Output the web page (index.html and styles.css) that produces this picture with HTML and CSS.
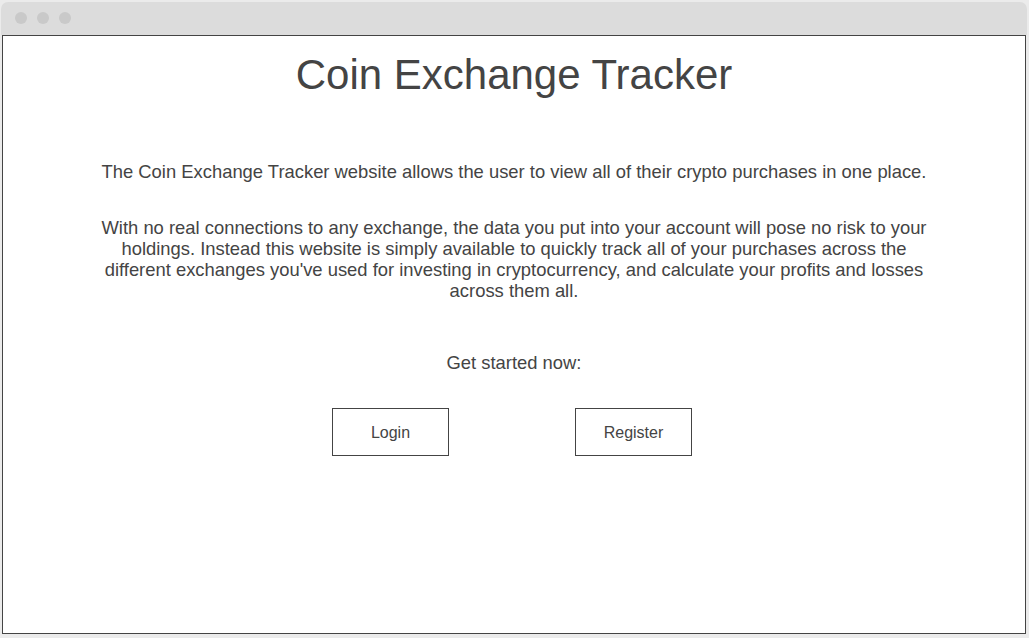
FILE: index.html
```html
<!DOCTYPE html>
<html>
<head>
<meta charset="utf-8">
<link rel="stylesheet" href="styles.css">
</head>
<body>
<div class="window">
  <div class="titlebar">
    <span class="dot"></span><span class="dot"></span><span class="dot"></span>
  </div>
  <div class="content">
    <h1 class="title">Coin Exchange Tracker</h1>
    <p class="intro">The Coin Exchange Tracker website allows the user to view all of their crypto purchases in one place.</p>
    <p class="desc">With no real connections to any exchange, the data you put into your account will pose no risk to your holdings. Instead this website is simply available to quickly track all of your purchases across the different exchanges you've used for investing in cryptocurrency, and calculate your profits and losses across them all.</p>
    <p class="cta">Get started now:</p>
    <div class="actions">
      <a class="btn">Login</a>
      <a class="btn">Register</a>
    </div>
  </div>
</div>
</body>
</html>
```

FILE: styles.css
```css
html, body {
  margin: 0;
  padding: 0;
  background: #ebebeb;
  height: 100%;
}
body {
  font-family: "Liberation Sans", Arial, sans-serif;
  color: #444;
}
.window {
  margin: 2px 2px 0 1px;
  height: 632px;
  display: flex;
  flex-direction: column;
}
.titlebar {
  height: 32px;
  background: #dcdcdc;
  border-radius: 7px 7px 0 0;
  display: flex;
  align-items: center;
  gap: 10px;
  padding-left: 14px;
  padding-bottom: 1px;
}
.dot {
  width: 12px;
  height: 12px;
  border-radius: 50%;
  background: #c9c9c9;
}
.content {
  flex: 1;
  margin-left: 1px;
  margin-right: 1px;
  background: #fff;
  border: 1.5px solid #444;
  display: flex;
  flex-direction: column;
  align-items: center;
}
.title {
  margin: 15px 0 0;
  font-size: 42px;
  font-weight: normal;
  line-height: 48px;
}
.intro {
  margin: 62px 0 0;
  font-size: 18.4px;
  line-height: 21px;
  text-align: center;
  white-space: nowrap;
}
.desc {
  margin: 35px 0 0;
  width: 832px;
  font-size: 18.4px;
  line-height: 21px;
  text-align: center;
}
.cta {
  margin: 51px 0 0;
  font-size: 18.4px;
  line-height: 21px;
}
.actions {
  margin-top: 35px;
  padding-right: 4px;
  display: flex;
  gap: 126px;
}
.btn {
  width: 115px;
  height: 46px;
  border: 1px solid #444;
  display: flex;
  align-items: center;
  justify-content: center;
  padding-top: 2px;
  box-sizing: content-box;
  height: 44px;
  font-size: 16px;
  color: #444;
}
```
